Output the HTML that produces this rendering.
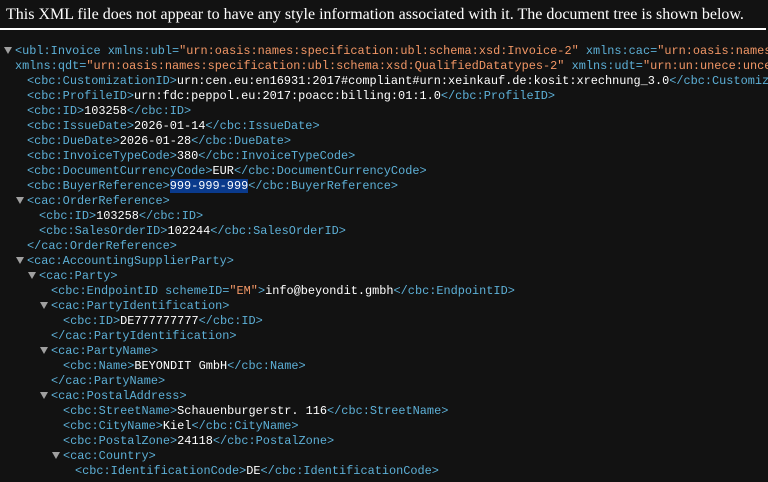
<!DOCTYPE html>
<html><head><meta charset="utf-8"><style>
html,body{margin:0;padding:0;background:#121212;width:768px;height:482px;overflow:hidden}
#w{position:absolute;left:0;top:0;width:768px;height:482px;overflow:hidden}
#c{position:absolute;left:0;top:2px;width:768px;height:480px;overflow:hidden}
.hdr{position:absolute;left:6px;top:5px;font-family:"Liberation Serif",serif;font-size:16px;color:#fff;white-space:nowrap;line-height:20px}
.bar{position:absolute;left:0;top:28px;width:766px;height:2px;background:#fff}
.l{position:absolute;font-family:"Liberation Mono",monospace;font-size:11.9px;line-height:15px;height:15px;white-space:pre;color:#fff}
.t{color:#5db0d7}.v{color:#f29766}
.tri{position:absolute;width:0;height:0;border-left:4px solid transparent;border-right:4px solid transparent;border-top:7px solid #a0a0a0}
.sel{background:#0a3a8c}
</style></head><body><div id="w">
<div class="hdr">This XML file does not appear to have any style information associated with it. The document tree is shown below.</div>
<div class="bar"></div>
<div class="tri" style="left:4px;top:47px"></div>
<div class="tri" style="left:16px;top:197px"></div>
<div class="tri" style="left:16px;top:257px"></div>
<div class="tri" style="left:28px;top:272px"></div>
<div class="tri" style="left:40px;top:302px"></div>
<div class="tri" style="left:40px;top:347px"></div>
<div class="tri" style="left:40px;top:392px"></div>
<div class="tri" style="left:52px;top:452px"></div>
<div id="c">
<div class="l" style="left:15px;top:42px"><span class="t">&lt;ubl:Invoice xmlns:ubl=</span><span class="v">"urn:oasis:names:specification:ubl:schema:xsd:Invoice-2"</span><span class="t"> xmlns:cac=</span><span class="v">"urn:oasis:names:specification:ubl:schema:xsd:CommonAggregateComponents-2"</span></div>
<div class="l" style="left:15px;top:57px"><span class="t">xmlns:qdt=</span><span class="v">"urn:oasis:names:specification:ubl:schema:xsd:QualifiedDatatypes-2"</span><span class="t"> xmlns:udt=</span><span class="v">"urn:un:unece:uncefact:data"</span></div>
<div class="l" style="left:27px;top:72px"><span class="t">&lt;cbc:CustomizationID&gt;</span>urn:cen.eu:en16931:2017#compliant#urn:xeinkauf.de:kosit:xrechnung_3.0<span class="t">&lt;/cbc:CustomizationID&gt;</span></div>
<div class="l" style="left:27px;top:87px"><span class="t">&lt;cbc:ProfileID&gt;</span>urn:fdc:peppol.eu:2017:poacc:billing:01:1.0<span class="t">&lt;/cbc:ProfileID&gt;</span></div>
<div class="l" style="left:27px;top:102px"><span class="t">&lt;cbc:ID&gt;</span>103258<span class="t">&lt;/cbc:ID&gt;</span></div>
<div class="l" style="left:27px;top:117px"><span class="t">&lt;cbc:IssueDate&gt;</span>2026-01-14<span class="t">&lt;/cbc:IssueDate&gt;</span></div>
<div class="l" style="left:27px;top:132px"><span class="t">&lt;cbc:DueDate&gt;</span>2026-01-28<span class="t">&lt;/cbc:DueDate&gt;</span></div>
<div class="l" style="left:27px;top:147px"><span class="t">&lt;cbc:InvoiceTypeCode&gt;</span>380<span class="t">&lt;/cbc:InvoiceTypeCode&gt;</span></div>
<div class="l" style="left:27px;top:162px"><span class="t">&lt;cbc:DocumentCurrencyCode&gt;</span>EUR<span class="t">&lt;/cbc:DocumentCurrencyCode&gt;</span></div>
<div class="l" style="left:27px;top:177px"><span class="t">&lt;cbc:BuyerReference&gt;</span><span class="sel">999-999-999</span><span class="t">&lt;/cbc:BuyerReference&gt;</span></div>
<div class="l" style="left:27px;top:192px"><span class="t">&lt;cac:OrderReference&gt;</span></div>
<div class="l" style="left:39px;top:207px"><span class="t">&lt;cbc:ID&gt;</span>103258<span class="t">&lt;/cbc:ID&gt;</span></div>
<div class="l" style="left:39px;top:222px"><span class="t">&lt;cbc:SalesOrderID&gt;</span>102244<span class="t">&lt;/cbc:SalesOrderID&gt;</span></div>
<div class="l" style="left:27px;top:237px"><span class="t">&lt;/cac:OrderReference&gt;</span></div>
<div class="l" style="left:27px;top:252px"><span class="t">&lt;cac:AccountingSupplierParty&gt;</span></div>
<div class="l" style="left:39px;top:267px"><span class="t">&lt;cac:Party&gt;</span></div>
<div class="l" style="left:51px;top:282px"><span class="t">&lt;cbc:EndpointID schemeID=</span><span class="v">"EM"</span><span class="t">&gt;</span>info@beyondit.gmbh<span class="t">&lt;/cbc:EndpointID&gt;</span></div>
<div class="l" style="left:51px;top:297px"><span class="t">&lt;cac:PartyIdentification&gt;</span></div>
<div class="l" style="left:63px;top:312px"><span class="t">&lt;cbc:ID&gt;</span>DE777777777<span class="t">&lt;/cbc:ID&gt;</span></div>
<div class="l" style="left:51px;top:327px"><span class="t">&lt;/cac:PartyIdentification&gt;</span></div>
<div class="l" style="left:51px;top:342px"><span class="t">&lt;cac:PartyName&gt;</span></div>
<div class="l" style="left:63px;top:357px"><span class="t">&lt;cbc:Name&gt;</span>BEYONDIT GmbH<span class="t">&lt;/cbc:Name&gt;</span></div>
<div class="l" style="left:51px;top:372px"><span class="t">&lt;/cac:PartyName&gt;</span></div>
<div class="l" style="left:51px;top:387px"><span class="t">&lt;cac:PostalAddress&gt;</span></div>
<div class="l" style="left:63px;top:402px"><span class="t">&lt;cbc:StreetName&gt;</span>Schauenburgerstr. 116<span class="t">&lt;/cbc:StreetName&gt;</span></div>
<div class="l" style="left:63px;top:417px"><span class="t">&lt;cbc:CityName&gt;</span>Kiel<span class="t">&lt;/cbc:CityName&gt;</span></div>
<div class="l" style="left:63px;top:432px"><span class="t">&lt;cbc:PostalZone&gt;</span>24118<span class="t">&lt;/cbc:PostalZone&gt;</span></div>
<div class="l" style="left:63px;top:447px"><span class="t">&lt;cac:Country&gt;</span></div>
<div class="l" style="left:75px;top:462px"><span class="t">&lt;cbc:IdentificationCode&gt;</span>DE<span class="t">&lt;/cbc:IdentificationCode&gt;</span></div>
</div></div>
</body></html>
